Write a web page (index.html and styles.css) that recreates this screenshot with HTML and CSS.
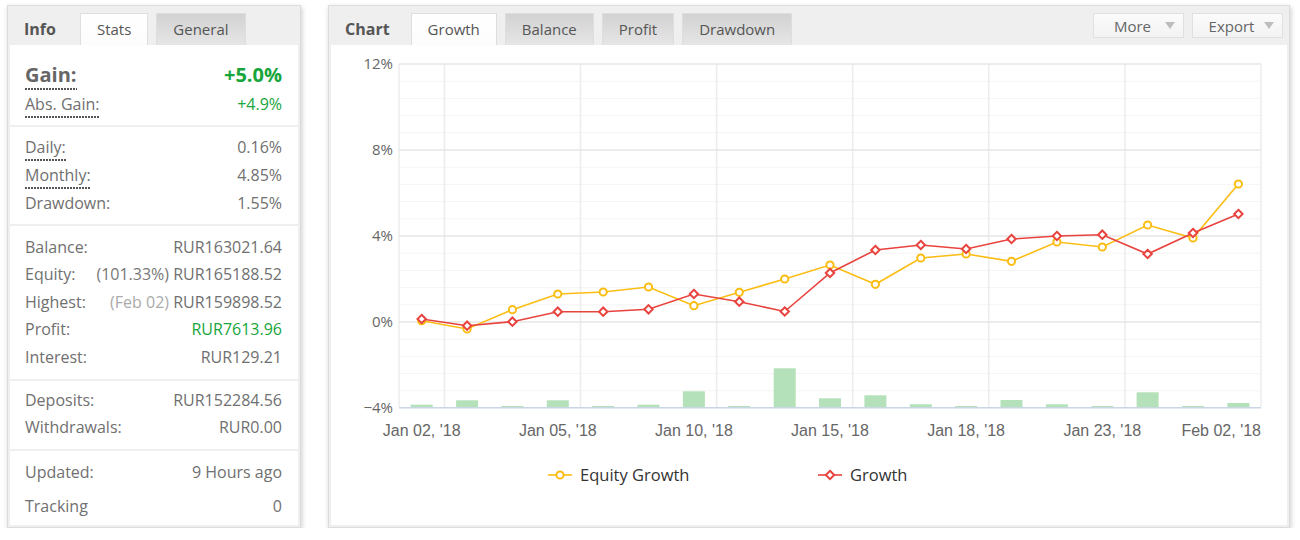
FILE: index.html
```html
<!DOCTYPE html>
<html lang="en">
<head>
    <meta charset="UTF-8">
    <title>Account stats</title>
    <link rel="stylesheet" href="styles.css">
</head>
<body>
<div class="page">

    <div class="panel panel-info">
        <div class="head">
            <div class="title title-info">Info</div>
            <div class="tab active">Stats</div>
            <div class="tab">General</div>
        </div>
        <div class="body info-body">
            <div class="grp grp-gain">
                <div class="row row-big"><span class="lbl dotted">Gain:</span><span class="green">+5.0%</span></div>
                <div class="row row-30"><span class="lbl dotted">Abs. Gain:</span><span class="green">+4.9%</span></div>
            </div>
            <div class="grp grp-rate">
                <div class="row"><span class="lbl dotted">Daily:</span><span>0.16%</span></div>
                <div class="row"><span class="lbl dotted">Monthly:</span><span>4.85%</span></div>
                <div class="row"><span class="lbl">Drawdown:</span><span>1.55%</span></div>
            </div>
            <div class="grp grp-money">
                <div class="row"><span class="lbl">Balance:</span><span>RUR163021.64</span></div>
                <div class="row"><span class="lbl">Equity:</span><span><span class="note">(101.33%)</span> RUR165188.52</span></div>
                <div class="row"><span class="lbl">Highest:</span><span><span class="note light">(Feb 02)</span> RUR159898.52</span></div>
                <div class="row"><span class="lbl">Profit:</span><span class="green">RUR7613.96</span></div>
                <div class="row"><span class="lbl">Interest:</span><span>RUR129.21</span></div>
            </div>
            <div class="grp grp-dep">
                <div class="row"><span class="lbl">Deposits:</span><span>RUR152284.56</span></div>
                <div class="row"><span class="lbl">Withdrawals:</span><span>RUR0.00</span></div>
            </div>
            <div class="grp grp-upd">
                <div class="row row-34"><span class="lbl">Updated:</span><span>9 Hours ago</span></div>
                <div class="row row-34"><span class="lbl">Tracking</span><span>0</span></div>
            </div>
        </div>
    </div>

    <div class="panel panel-chart">
        <div class="head">
            <div class="title">Chart</div>
            <div class="tab active">Growth</div>
            <div class="tab">Balance</div>
            <div class="tab">Profit</div>
            <div class="tab">Drawdown</div>
            <div class="tools">
                <div class="btn"><span>More</span><i class="caret"></i></div>
                <div class="btn"><span>Export</span><i class="caret"></i></div>
            </div>
        </div>
        <div class="body chart-body">
            <svg class="chart" width="956" height="480" viewBox="0 0 956 480">
                <defs>
                    <circle id="dot" r="3.6" fill="#fff" stroke="#fbbd14" stroke-width="2"/>
                    <path id="dia" d="M0 -4.2 L4.2 0 L0 4.2 L-4.2 0 Z" fill="#fff" stroke="#e8433e" stroke-width="2"/>
                </defs>

                <!-- minor grid -->
                <g stroke="#f4f4f4" stroke-width="1">
                    <line x1="68" x2="930" y1="36.2" y2="36.2"/>
                    <line x1="68" x2="930" y1="53.4" y2="53.4"/>
                    <line x1="68" x2="930" y1="70.6" y2="70.6"/>
                    <line x1="68" x2="930" y1="87.8" y2="87.8"/>
                    <line x1="68" x2="930" y1="122.2" y2="122.2"/>
                    <line x1="68" x2="930" y1="139.4" y2="139.4"/>
                    <line x1="68" x2="930" y1="156.6" y2="156.6"/>
                    <line x1="68" x2="930" y1="173.8" y2="173.8"/>
                    <line x1="68" x2="930" y1="208.2" y2="208.2"/>
                    <line x1="68" x2="930" y1="225.4" y2="225.4"/>
                    <line x1="68" x2="930" y1="242.6" y2="242.6"/>
                    <line x1="68" x2="930" y1="259.8" y2="259.8"/>
                    <line x1="68" x2="930" y1="294.2" y2="294.2"/>
                    <line x1="68" x2="930" y1="311.4" y2="311.4"/>
                    <line x1="68" x2="930" y1="328.6" y2="328.6"/>
                    <line x1="68" x2="930" y1="345.8" y2="345.8"/>
                </g>
                <!-- vertical grid -->
                <g stroke="#ececec" stroke-width="1.5">
                    <line x1="68" x2="68" y1="19" y2="362"/>
                    <line x1="113.4" x2="113.4" y1="19" y2="362"/>
                    <line x1="249.5" x2="249.5" y1="19" y2="362"/>
                    <line x1="385.6" x2="385.6" y1="19" y2="362"/>
                    <line x1="521.7" x2="521.7" y1="19" y2="362"/>
                    <line x1="657.8" x2="657.8" y1="19" y2="362"/>
                    <line x1="794" x2="794" y1="19" y2="362"/>
                    <line x1="930" x2="930" y1="19" y2="362"/>
                </g>
                <!-- major grid -->
                <g stroke="#e6e6e6" stroke-width="1.5">
                    <line x1="68" x2="930" y1="19" y2="19"/>
                    <line x1="68" x2="930" y1="105" y2="105"/>
                    <line x1="68" x2="930" y1="191" y2="191"/>
                    <line x1="68" x2="930" y1="277" y2="277"/>
                </g>

                <!-- daily bars -->
                <g fill="#b4e1b9">
                    <rect x="79.7" y="359.7" width="22" height="2.3"/>
                    <rect x="125.1" y="355.3" width="22" height="6.7"/>
                    <rect x="170.4" y="361" width="22" height="1"/>
                    <rect x="215.8" y="355.3" width="22" height="6.7"/>
                    <rect x="261.2" y="361" width="22" height="1"/>
                    <rect x="306.5" y="359.7" width="22" height="2.3"/>
                    <rect x="351.9" y="346.3" width="22" height="15.7"/>
                    <rect x="397.3" y="361" width="22" height="1"/>
                    <rect x="442.7" y="323.3" width="22" height="38.7"/>
                    <rect x="488" y="353.3" width="22" height="8.7"/>
                    <rect x="533.4" y="350.3" width="22" height="11.7"/>
                    <rect x="578.8" y="359.3" width="22" height="2.7"/>
                    <rect x="624.1" y="361" width="22" height="1"/>
                    <rect x="669.5" y="355" width="22" height="7"/>
                    <rect x="714.9" y="359.3" width="22" height="2.7"/>
                    <rect x="760.3" y="361" width="22" height="1"/>
                    <rect x="805.6" y="347.3" width="22" height="14.7"/>
                    <rect x="851" y="361" width="22" height="1"/>
                    <rect x="896.4" y="358" width="22" height="4"/>
                </g>
                <line x1="68" x2="930" y1="362.8" y2="362.8" stroke="#c9d6e3" stroke-width="1.6"/>

                <!-- equity growth -->
                <polyline fill="none" stroke="#fbbd14" stroke-width="1.6"
                    points="90.7,275.7 136.1,284 181.4,264.7 226.8,249 272.2,247 317.5,242 362.9,260.7 408.3,247.3 453.7,234 499,220 544.4,239.3 589.8,213 635.1,209 680.5,216.3 725.9,197 771.3,202 816.6,180 862,193 907.4,139"/>
                <g>
                    <use href="#dot" x="90.7" y="275.7"/>
                    <use href="#dot" x="136.1" y="284"/>
                    <use href="#dot" x="181.4" y="264.7"/>
                    <use href="#dot" x="226.8" y="249"/>
                    <use href="#dot" x="272.2" y="247"/>
                    <use href="#dot" x="317.5" y="242"/>
                    <use href="#dot" x="362.9" y="260.7"/>
                    <use href="#dot" x="408.3" y="247.3"/>
                    <use href="#dot" x="453.7" y="234"/>
                    <use href="#dot" x="499" y="220"/>
                    <use href="#dot" x="544.4" y="239.3"/>
                    <use href="#dot" x="589.8" y="213"/>
                    <use href="#dot" x="635.1" y="209"/>
                    <use href="#dot" x="680.5" y="216.3"/>
                    <use href="#dot" x="725.9" y="197"/>
                    <use href="#dot" x="771.3" y="202"/>
                    <use href="#dot" x="816.6" y="180"/>
                    <use href="#dot" x="862" y="193"/>
                    <use href="#dot" x="907.4" y="139"/>
                </g>

                <!-- growth -->
                <polyline fill="none" stroke="#e8433e" stroke-width="1.6"
                    points="90.7,274 136.1,280.7 181.4,276.7 226.8,266.7 272.2,266.7 317.5,264.3 362.9,249 408.3,256.7 453.7,266.5 499,228 544.4,205 589.8,200 635.1,204 680.5,194 725.9,191 771.3,189.7 816.6,209 862,188 907.4,169"/>
                <g>
                    <use href="#dia" x="90.7" y="274"/>
                    <use href="#dia" x="136.1" y="280.7"/>
                    <use href="#dia" x="181.4" y="276.7"/>
                    <use href="#dia" x="226.8" y="266.7"/>
                    <use href="#dia" x="272.2" y="266.7"/>
                    <use href="#dia" x="317.5" y="264.3"/>
                    <use href="#dia" x="362.9" y="249"/>
                    <use href="#dia" x="408.3" y="256.7"/>
                    <use href="#dia" x="453.7" y="266.5"/>
                    <use href="#dia" x="499" y="228"/>
                    <use href="#dia" x="544.4" y="205"/>
                    <use href="#dia" x="589.8" y="200"/>
                    <use href="#dia" x="635.1" y="204"/>
                    <use href="#dia" x="680.5" y="194"/>
                    <use href="#dia" x="725.9" y="191"/>
                    <use href="#dia" x="771.3" y="189.7"/>
                    <use href="#dia" x="816.6" y="209"/>
                    <use href="#dia" x="862" y="188"/>
                    <use href="#dia" x="907.4" y="169"/>
                </g>

                <!-- y axis -->
                <g class="ylab" text-anchor="end">
                    <text x="62" y="24">12%</text>
                    <text x="62" y="110">8%</text>
                    <text x="62" y="196">4%</text>
                    <text x="62" y="282">0%</text>
                    <text x="62" y="368">−4%</text>
                </g>
                <!-- x axis -->
                <g class="xlab" text-anchor="middle">
                    <text x="90.7" y="391">Jan 02, '18</text>
                    <text x="226.8" y="391">Jan 05, '18</text>
                    <text x="362.9" y="391">Jan 10, '18</text>
                    <text x="499" y="391">Jan 15, '18</text>
                    <text x="635.1" y="391">Jan 18, '18</text>
                    <text x="771.3" y="391">Jan 23, '18</text>
                    <text x="930" y="391" text-anchor="end">Feb 02, '18</text>
                </g>

                <!-- legend -->
                <g class="legend">
                    <line x1="217" x2="241" y1="430" y2="430" stroke="#fbbd14" stroke-width="1.6"/>
                    <use href="#dot" x="229" y="430"/>
                    <text x="249" y="436">Equity Growth</text>
                    <line x1="487" x2="511" y1="430" y2="430" stroke="#e8433e" stroke-width="1.6"/>
                    <use href="#dia" x="499" y="430"/>
                    <text x="519" y="436">Growth</text>
                </g>
            </svg>
        </div>
    </div>

</div>
</body>
</html>
```

FILE: styles.css
```css
* {
    box-sizing: border-box;
}
body {
    margin: 0;
    padding: 5px 0 0 7px;
    font-family: "Open Sans", "Noto Sans", sans-serif;
    font-size: 15px;
    color: #707070;
    background: #fff;
}
.page {
    display: flex;
    align-items: flex-start;
    gap: 27px;
}
.panel {
    background: #efefef;
    border: 1px solid #dcdcdc;
    box-shadow: 1px 2px 5px rgba(0, 0, 0, 0.2);
}
.panel-info {
    width: 294px;
}
.panel-chart {
    width: 962px;
}
.head {
    display: flex;
    align-items: flex-end;
    height: 39px;
}
.title {
    height: 32px;
    line-height: 32px;
    padding: 0 21px 0 16px;
    font-size: 16px;
    font-weight: bold;
    color: #555;
}
.title-info {
    padding-right: 24px;
}
.tab {
    height: 32px;
    line-height: 31px;
    padding: 0 16px;
    margin-right: 8px;
    color: #555;
    border: 1px solid #dedede;
    border-bottom: 0;
    background: linear-gradient(#d2d2d2, #e6e6e6);
}
.tab.active {
    background: linear-gradient(#fff, #fcfcfc);
}
.tools {
    display: flex;
    gap: 8px;
    margin-left: auto;
    margin-right: 6px;
    align-self: flex-start;
    margin-top: 7px;
}
.btn {
    display: flex;
    align-items: center;
    width: 91px;
    height: 25px;
    padding: 0 8px 0 6px;
    color: #666;
    background: linear-gradient(#fbfbfb, #f3f3f3);
    border: 1px solid #e0e0e0;
}
.btn span {
    flex: 1;
    text-align: center;
}
.caret {
    width: 0;
    height: 0;
    border-left: 5px solid transparent;
    border-right: 5px solid transparent;
    border-top: 7px solid #bdbdbd;
}
.body {
    background: #fff;
    margin: 0 2px 2px;
    height: 480px;
}
.info-body {
    padding: 0 16px 0 15px;
    font-size: 16px;
}
.grp {
    border-top: 2px solid #efefef;
    margin: 0 -16px 0 -15px;
    padding-left: 15px;
    padding-right: 16px;
}
.grp-gain {
    border-top: 0;
    padding-top: 14px;
    padding-bottom: 6px;
}
.grp-rate {
    padding-top: 6px;
    padding-bottom: 7px;
}
.grp-money {
    padding-top: 7px;
    padding-bottom: 8px;
}
.grp-money .row {
    height: 27.5px;
}
.grp-dep {
    padding-top: 6px;
    padding-bottom: 8px;
}
.grp-dep .row {
    height: 27px;
}
.grp-upd {
    padding-top: 4px;
}
.row {
    display: flex;
    justify-content: space-between;
    align-items: center;
    height: 28px;
}
.row-big {
    height: 30px;
    font-size: 20px;
    font-weight: bold;
}
.row-big .lbl {
    color: #666;
}
.row-30 {
    height: 30px;
}
.row-34 {
    height: 34px;
}
.dotted {
    display: inline-block;
    line-height: 20px;
    padding-bottom: 4px;
    margin-bottom: -4px;
    background: linear-gradient(90deg, #555 2px, transparent 2px) left bottom / 3px 2px repeat-x;
}
.row-big .dotted {
    line-height: 24px;
    padding-bottom: 3px;
}
.green {
    color: #17a53c;
}
.note {
    color: #777;
}
.note.light {
    color: #aaa;
}
.chart {
    display: block;
}
.ylab {
    font-family: "Open Sans", sans-serif;
    font-size: 15px;
    fill: #666;
}
.xlab {
    font-family: "Liberation Sans", Arial, sans-serif;
    font-size: 16px;
    fill: #666;
}
.legend text {
    font-family: "Open Sans", sans-serif;
    font-size: 16.5px;
    fill: #333;
}
```
